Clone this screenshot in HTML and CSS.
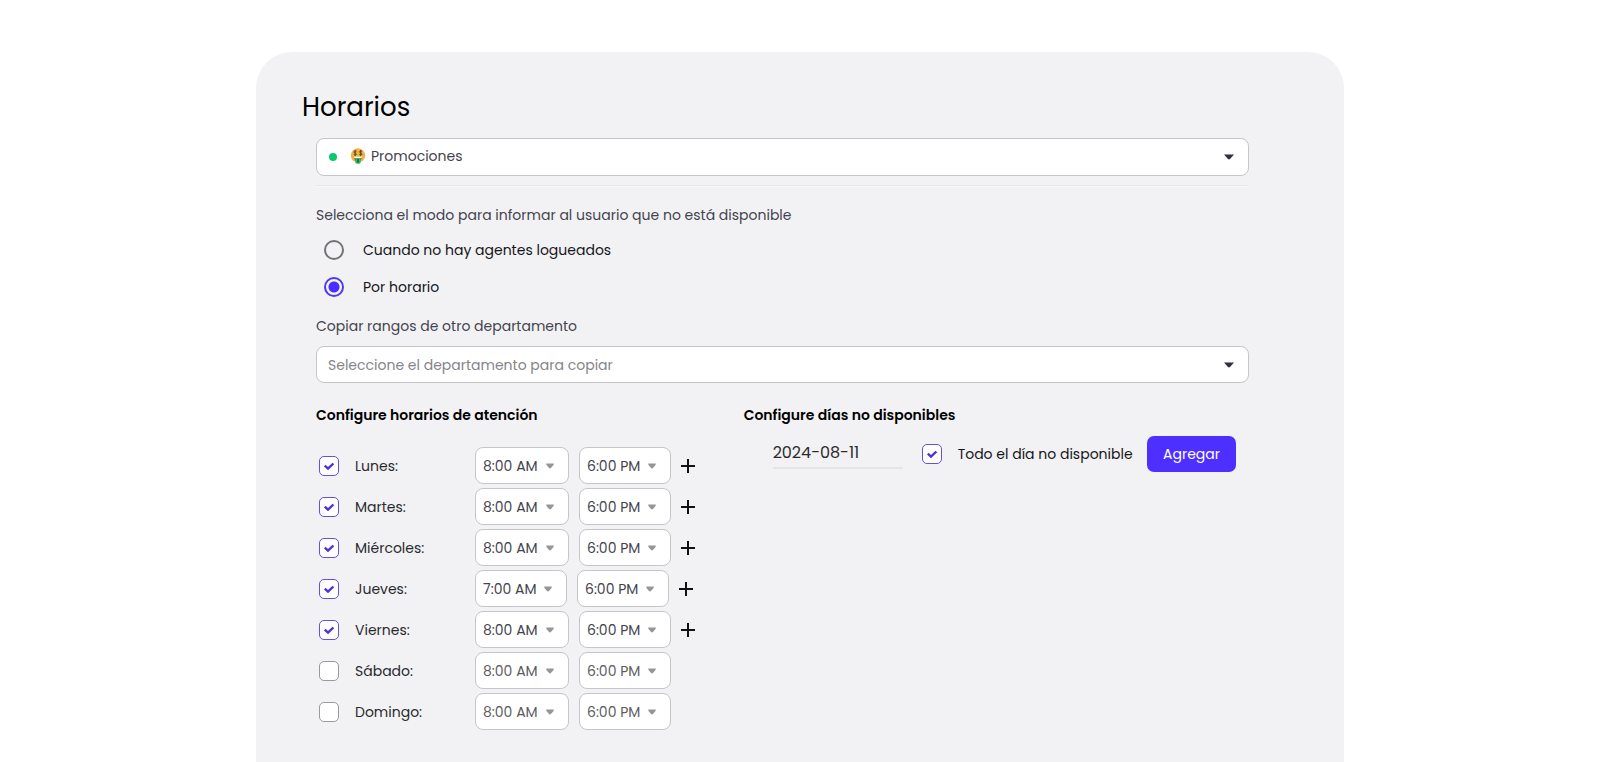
FILE: index.html
```html
<!DOCTYPE html>
<html lang="es">
<head>
<meta charset="utf-8">
<meta name="viewport" content="width=device-width, initial-scale=1">
<title>Horarios</title>
<link rel="stylesheet" href="styles.css">
</head>
<body>
<svg width="0" height="0" class="sprite" aria-hidden="true">
  <symbol id="caret" viewBox="0 0 10 6"><path d="M0 .5h10L6 5q-1 .9-2 0z"/></symbol>
  <symbol id="caret-soft" viewBox="0 0 8 6"><path d="M.6.5h6.8q.8 0 .4.8C7 3.200 5.600 4.400 4.500 5.200q-.5.400-1 0C2.400 4.400 1 3.200.2 1.300Q-.2.5.6.5z"/></symbol>
  <symbol id="plus" viewBox="0 0 14 14"><path d="M7 0v14M0 7h14" stroke="currentColor" stroke-width="2"/></symbol>
</svg>
<main class="card">
  <h1 class="title">Horarios</h1>
  <form class="content">
    <div class="picker department">
      <select class="field" aria-label="Departamento"><option>Promociones</option></select>
      <span class="dot"></span>
      <svg class="emoji" viewBox="0 0 16 16" aria-hidden="true">
        <circle cx="8" cy="7.500" r="7.200" fill="#f3b13f"/>
        <path d="M4 9h8c0 2.600-1.600 4-4 4S4 11.600 4 9z" fill="#6a523a"/>
        <path d="M4 8.800h8l-.3 1.500H4.300z" fill="#fff"/>
        <path d="M5.300 10.400h5.400V14q0 1.700-1.700 1.700H7q-1.700 0-1.700-1.700z" fill="#21bd68"/>
        <path d="M8 11v3.600" stroke="#08633c" stroke-width="1.400"/>
        <g fill="none" stroke="#59432a" stroke-width="1">
          <path d="M6.400 3.400C5 2.400 3.700 3.200 4.100 4.300c.3.900 2.100.6 2.200 1.700.1 1.100-1.500 1.400-2.500.5M5.100 2v5.800"/>
          <path d="M12 3.400c-1.400-1-2.700-.2-2.300.9.300.9 2.100.6 2.200 1.700.1 1.100-1.500 1.400-2.500.5M10.700 2v5.800"/>
        </g>
      </svg>
      <svg class="caret"><use href="#caret"/></svg>
    </div>
    <hr class="divider">
    <fieldset class="modes">
      <legend class="caption">Selecciona el modo para informar al usuario que no está disponible</legend>
      <label class="mode"><input class="radio" type="radio" name="modo">Cuando no hay agentes logueados</label>
      <label class="mode"><input class="radio" type="radio" name="modo" checked>Por horario</label>
    </fieldset>
    <label class="caption copy-caption" for="copiar">Copiar rangos de otro departamento</label>
    <div class="picker">
      <select class="field empty" id="copiar"><option>Seleccione el departamento para copiar</option></select>
      <svg class="caret"><use href="#caret"/></svg>
    </div>
    <div class="columns">
      <section>
        <h2 class="heading">Configure horarios de atención</h2>
        <div class="days">
          <div class="day">
            <label class="day-name"><input class="check" type="checkbox" checked>Lunes:</label>
            <div class="picker time"><select class="field" aria-label="Lunes desde"><option>8:00 AM</option></select><svg class="caret"><use href="#caret-soft"/></svg></div>
            <div class="picker time end"><select class="field" aria-label="Lunes hasta"><option>6:00 PM</option></select><svg class="caret"><use href="#caret-soft"/></svg></div>
            <button class="add" type="button" aria-label="Agregar rango"><svg><use href="#plus"/></svg></button>
          </div>
          <div class="day">
            <label class="day-name"><input class="check" type="checkbox" checked>Martes:</label>
            <div class="picker time"><select class="field" aria-label="Martes desde"><option>8:00 AM</option></select><svg class="caret"><use href="#caret-soft"/></svg></div>
            <div class="picker time end"><select class="field" aria-label="Martes hasta"><option>6:00 PM</option></select><svg class="caret"><use href="#caret-soft"/></svg></div>
            <button class="add" type="button" aria-label="Agregar rango"><svg><use href="#plus"/></svg></button>
          </div>
          <div class="day">
            <label class="day-name"><input class="check" type="checkbox" checked>Miércoles:</label>
            <div class="picker time"><select class="field" aria-label="Miércoles desde"><option>8:00 AM</option></select><svg class="caret"><use href="#caret-soft"/></svg></div>
            <div class="picker time end"><select class="field" aria-label="Miércoles hasta"><option>6:00 PM</option></select><svg class="caret"><use href="#caret-soft"/></svg></div>
            <button class="add" type="button" aria-label="Agregar rango"><svg><use href="#plus"/></svg></button>
          </div>
          <div class="day">
            <label class="day-name"><input class="check" type="checkbox" checked>Jueves:</label>
            <div class="picker time end"><select class="field" aria-label="Jueves desde"><option>7:00 AM</option></select><svg class="caret"><use href="#caret-soft"/></svg></div>
            <div class="picker time end"><select class="field" aria-label="Jueves hasta"><option>6:00 PM</option></select><svg class="caret"><use href="#caret-soft"/></svg></div>
            <button class="add" type="button" aria-label="Agregar rango"><svg><use href="#plus"/></svg></button>
          </div>
          <div class="day">
            <label class="day-name"><input class="check" type="checkbox" checked>Viernes:</label>
            <div class="picker time"><select class="field" aria-label="Viernes desde"><option>8:00 AM</option></select><svg class="caret"><use href="#caret-soft"/></svg></div>
            <div class="picker time end"><select class="field" aria-label="Viernes hasta"><option>6:00 PM</option></select><svg class="caret"><use href="#caret-soft"/></svg></div>
            <button class="add" type="button" aria-label="Agregar rango"><svg><use href="#plus"/></svg></button>
          </div>
          <div class="day">
            <label class="day-name"><input class="check" type="checkbox">Sábado:</label>
            <div class="picker time"><select class="field" aria-label="Sábado desde" disabled><option>8:00 AM</option></select><svg class="caret"><use href="#caret-soft"/></svg></div>
            <div class="picker time end"><select class="field" aria-label="Sábado hasta" disabled><option>6:00 PM</option></select><svg class="caret"><use href="#caret-soft"/></svg></div>
          </div>
          <div class="day">
            <label class="day-name"><input class="check" type="checkbox">Domingo:</label>
            <div class="picker time"><select class="field" aria-label="Domingo desde" disabled><option>8:00 AM</option></select><svg class="caret"><use href="#caret-soft"/></svg></div>
            <div class="picker time end"><select class="field" aria-label="Domingo hasta" disabled><option>6:00 PM</option></select><svg class="caret"><use href="#caret-soft"/></svg></div>
          </div>
        </div>
      </section>
      <section>
        <h2 class="heading">Configure días no disponibles</h2>
        <div class="absence">
          <input class="date" type="text" value="2024-08-11" aria-label="Fecha">
          <label class="all-day"><input class="check" type="checkbox" checked>Todo el día no disponible</label>
          <button class="submit" type="button">Agregar</button>
        </div>
      </section>
    </div>
  </form>
</main>
</body>
</html>
```

FILE: styles.css
```css
* { box-sizing: border-box; }

body {
  margin: 0;
  background: #fff;
  color: #16161a;
  font: 14px/22px Poppins, Inter, "Open Sans", sans-serif;
}

.sprite { position: absolute; }

.card {
  margin: 52px 16% 0;
  min-height: calc(100vh - 52px);
  padding: 37px 95px 28px 60px;
  border-radius: 36px 36px 0 0;
  background: #f2f2f4;
}

.title {
  margin: 0 0 13px -14px;
  color: #000;
  font-size: 26px;
  font-weight: 400;
  line-height: 36px;
}

.picker { position: relative; }

.field {
  display: block;
  width: 100%;
  height: 37px;
  padding: 0 36px 0 11px;
  border: 1px solid #c6c6ca;
  border-radius: 8px;
  background: #fff;
  color: #44444f;
  font: inherit;
  appearance: none;
}

.field:disabled {
  color: #5c5c62;
  opacity: 1;
}

.field.empty { color: #85858a; }

.department .field {
  height: 38px;
  padding: 0 36px 2px 54px;
}

.dot {
  position: absolute;
  left: 13px;
  top: 15px;
  width: 8px;
  height: 8px;
  border-radius: 50%;
  background: #0ac96c;
}

.emoji {
  position: absolute;
  left: 34px;
  top: 10px;
  width: 16px;
  height: 16px;
}

.caret {
  position: absolute;
  right: 15px;
  top: 16px;
  width: 10px;
  height: 6px;
  fill: #30303d;
  pointer-events: none;
}

.divider {
  height: 2px;
  margin: 9px 0 17px;
  border: 0;
  border-top: 1px solid #e6e6e9;
  border-bottom: 1px solid #f8f8fa;
}

.modes {
  margin: 0;
  padding: 0;
  border: 0;
}

.caption {
  display: block;
  padding: 0;
  color: #44444f;
}

.copy-caption { margin: 10px 0 9px; }

.mode {
  display: flex;
  align-items: center;
  gap: 19px;
  height: 37px;
  padding-left: 8px;
}

.modes .caption { margin-bottom: 5px; }

.radio,
.check {
  flex: none;
  width: 20px;
  height: 20px;
  margin: 0;
  appearance: none;
}

.radio {
  border: 2px solid #747478;
  border-radius: 50%;
}

.radio:checked {
  border-color: #5138e8;
  background: radial-gradient(circle, #4a2dff 5px, transparent 6px);
}

.check {
  border: 1px solid #9a9a9e;
  border-radius: 5px;
  background: #fff;
}

.check:checked {
  border-color: #6650dc;
  background: #fff url("data:image/svg+xml,%3Csvg xmlns='http://www.w3.org/2000/svg' viewBox='0 0 18 18'%3E%3Cpath d='M4.800 8.700l3.200 3 5.400-5.200' fill='none' stroke='%234d32da' stroke-width='2.400'/%3E%3C/svg%3E") center / 18px no-repeat;
}

.columns {
  display: grid;
  grid-template-columns: 11fr 13fr;
  margin-top: 21px;
}

.heading {
  margin: 0;
  color: #000;
  font-size: 14px;
  font-weight: 600;
  line-height: 22px;
}

.days {
  display: grid;
  gap: 4px;
  margin-top: 21px;
}

.day {
  display: flex;
  align-items: center;
  gap: 10px;
}

.day-name,
.all-day {
  display: flex;
  align-items: center;
  gap: 16px;
}

.day-name {
  width: 149px;
  padding-left: 3px;
  color: #2a2a2e;
}

.all-day { white-space: nowrap; }

.time { width: 94px; }

.time.end { width: 92px; }

.time .field { padding: 0 20px 0 7px; }

.time .caret {
  right: 15px;
  width: 8px;
  fill: #96969a;
}

.add {
  width: 14px;
  height: 14px;
  padding: 0;
  border: 0;
  background: none;
  color: #111;
}

.add svg {
  display: block;
  width: 14px;
  height: 14px;
}

.absence {
  display: flex;
  align-items: center;
  margin: 10px 13px 0 29px;
}

.date {
  width: 130px;
  height: 29px;
  margin-right: 19px;
  padding: 0 0 2px;
  border: 0;
  border-bottom: 2px solid #e4e4e7;
  background: none;
  color: #2a2a2e;
  font: inherit;
  font-size: 16px;
}

.submit {
  height: 36px;
  margin-left: auto;
  padding: 0 16px;
  border: 0;
  border-radius: 7px;
  background: #4d2fff;
  color: #fff;
  font: inherit;
}
```
